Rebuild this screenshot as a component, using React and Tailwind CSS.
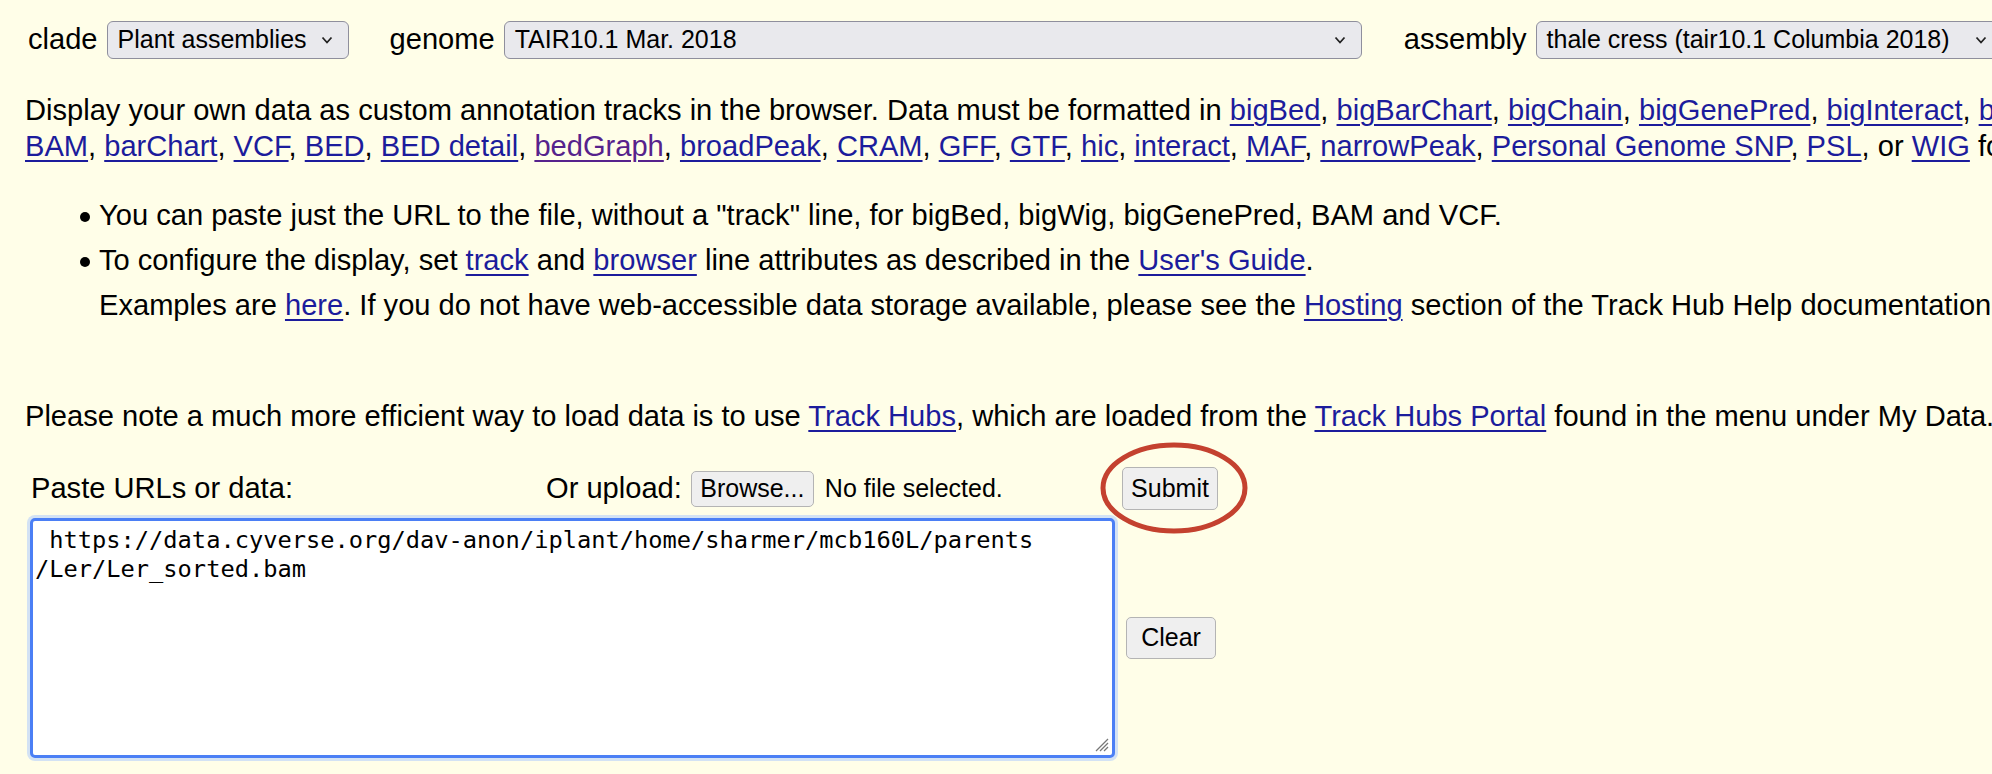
import React from 'react';

const Link = ({ children, visited }) => (
  <a
    href="#"
    className={`${visited ? 'text-[#56228c]' : 'text-[#1c1c9c]'} underline decoration-[2px] underline-offset-[4px]`}
  >
    {children}
  </a>
);

function Chevron() {
  return (
    <svg width="12" height="8" viewBox="0 0 12 8" className="shrink-0">
      <polyline points="1.5,1.5 6,6.5 10.5,1.5" fill="none" stroke="#222" strokeWidth="1.8" />
    </svg>
  );
}

function Select({ value, width }) {
  return (
    <div
      className={`flex items-center justify-between h-[38px] pl-[10px] pr-[15px] rounded-[6px] border border-[#8f8f9d] bg-[#e9e9ed] text-[25px] shrink-0 ${width}`}
    >
      <span>{value}</span>
      <Chevron />
    </div>
  );
}

const btn =
  'flex items-center justify-center shrink-0 rounded-[5px] border border-[#b4b4b4] bg-[#efefef] text-[25px] text-black';

export default function App() {
  return (
    <div className="w-[1992px] h-[774px] overflow-hidden bg-[#fffee8] text-black font-['Liberation_Sans',Arial,sans-serif] text-[29.1px]">
      {/* top selectors */}
      <div className="flex items-center whitespace-nowrap h-[38px] mt-[21px] pl-[28px]">
        <span className="mr-[9px]">clade</span>
        <Select value="Plant assemblies" width="w-[242px]" />
        <span className="ml-[41px] mr-[9px]">genome</span>
        <Select value="TAIR10.1 Mar. 2018" width="w-[858px]" />
        <span className="ml-[42px] mr-[9px]">assembly</span>
        <Select value="thale cress (tair10.1 Columbia 2018)" width="w-[467px]" />
      </div>

      <div className="pl-[25px] mt-[33px] leading-[36px] whitespace-nowrap">
        <div>
          Display your own data as custom annotation tracks in the browser. Data must be formatted in{' '}
          <Link>bigBed</Link>, <Link>bigBarChart</Link>, <Link>bigChain</Link>, <Link>bigGenePred</Link>,{' '}
          <Link>bigInteract</Link>, <Link>bigLolly</Link>, <Link>bigMaf</Link>, <Link>bigPsl</Link>, <Link>bigWig</Link>,
        </div>
        <div>
          <Link>BAM</Link>, <Link>barChart</Link>, <Link>VCF</Link>, <Link>BED</Link>, <Link>BED detail</Link>,{' '}
          <Link visited>bedGraph</Link>, <Link>broadPeak</Link>, <Link>CRAM</Link>, <Link>GFF</Link>, <Link>GTF</Link>,{' '}
          <Link>hic</Link>, <Link>interact</Link>, <Link>MAF</Link>, <Link>narrowPeak</Link>,{' '}
          <Link>Personal Genome SNP</Link>, <Link>PSL</Link>, or <Link>WIG</Link> formats.
        </div>

        <ul className="mt-[29px] leading-[45px]">
          <li className="flex">
            <div className="w-[74px] h-[45px] pl-[55px] flex items-center shrink-0">
              <span className="w-[10px] h-[10px] mt-[3px] rounded-full bg-black" />
            </div>
            <div>
              You can paste just the URL to the file, without a "track" line, for bigBed, bigWig, bigGenePred, BAM and VCF.
            </div>
          </li>
          <li className="flex">
            <div className="w-[74px] h-[45px] pl-[55px] flex items-center shrink-0">
              <span className="w-[10px] h-[10px] mt-[3px] rounded-full bg-black" />
            </div>
            <div>
              <div>
                To configure the display, set <Link>track</Link> and <Link>browser</Link> line attributes as described in
                the <Link>User's Guide</Link>.
              </div>
              <div>
                Examples are <Link>here</Link>. If you do not have web-accessible data storage available, please see the{' '}
                <Link>Hosting</Link> section of the Track Hub Help documentation.
              </div>
            </div>
          </li>
        </ul>

        <div className="mt-[70px]">
          Please note a much more efficient way to load data is to use <Link>Track Hubs</Link>, which are loaded from the{' '}
          <Link>Track Hubs Portal</Link> found in the menu under My Data.
        </div>
      </div>

      {/* upload form */}
      <div className="pl-[25px] mt-[33px] whitespace-nowrap">
        <div className="flex items-center h-[43px]">
          <div className="w-[521px] pl-[6px] shrink-0">Paste URLs or data:</div>
          <div className="w-[576px] flex items-center shrink-0">
            <span>Or upload:</span>
            <div className={`${btn} ml-[9px] w-[123px] h-[36px]`}>Browse...</div>
            <span className="ml-[11px] text-[25px]">No file selected.</span>
          </div>
          <div className="relative">
            <div className={`${btn} w-[96px] h-[43px]`}>Submit</div>
            <svg
              width="148"
              height="92"
              viewBox="0 0 148 92"
              className="absolute left-[-22px] top-[-25px] pointer-events-none"
            >
              <ellipse cx="74" cy="46" rx="71" ry="43" fill="none" stroke="#c4412f" strokeWidth="5" />
            </svg>
          </div>
        </div>

        <div className="flex items-center mt-[8px]">
          <div className="relative ml-[5px] shrink-0">
            <textarea
              readOnly
              value={' https://data.cyverse.org/dav-anon/iplant/home/sharmer/mcb160L/parents\n/Ler/Ler_sorted.bam'}
              className="block w-[1085px] h-[240px] resize-none overflow-hidden whitespace-pre rounded-[5px] border-[3px] border-[#4b7ff5] bg-white pt-[5px] pl-[2px] font-['DejaVu_Sans_Mono',monospace] text-[23.7px] leading-[29px] text-black outline-none shadow-[0_0_0_3px_#d3e2f4]"
            />
            <svg width="14" height="14" viewBox="0 0 14 14" className="absolute right-[6px] bottom-[6px]">
              <line x1="13" y1="1" x2="1" y2="13" stroke="#777" strokeWidth="1.2" />
              <line x1="13" y1="5" x2="5" y2="13" stroke="#777" strokeWidth="1.2" />
              <line x1="13" y1="9" x2="9" y2="13" stroke="#777" strokeWidth="1.2" />
            </svg>
          </div>
          <div className={`${btn} ml-[11px] w-[90px] h-[42px]`}>Clear</div>
        </div>
      </div>
    </div>
  );
}
